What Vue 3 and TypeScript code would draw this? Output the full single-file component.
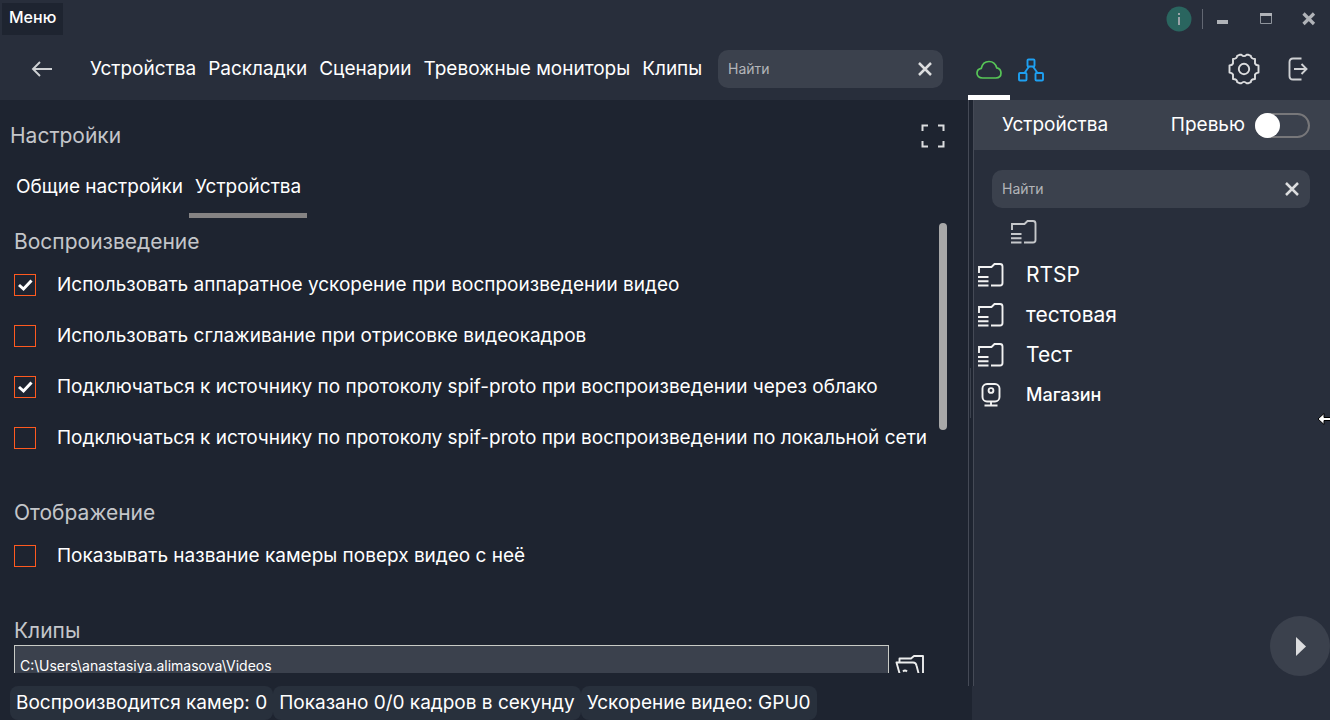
<script setup lang="ts">
import { ref } from 'vue'

interface Option { id: string; label: string; checked: boolean }
interface DeviceNode { id: string; label: string; kind: 'folder' | 'camera' }

const navItems: string[] = ['Устройства', 'Раскладки', 'Сценарии', 'Тревожные мониторы', 'Клипы']
const playback = ref<Option[]>([
  { id: 'hw', label: 'Использовать аппаратное ускорение при воспроизведении видео', checked: true },
  { id: 'smooth', label: 'Использовать сглаживание при отрисовке видеокадров', checked: false },
  { id: 'cloud', label: 'Подключаться к источнику по протоколу spif-proto при воспроизведении через облако', checked: true },
  { id: 'local', label: 'Подключаться к источнику по протоколу spif-proto при воспроизведении по локальной сети', checked: false },
])
const display = ref<Option[]>([
  { id: 'name', label: 'Показывать название камеры поверх видео с неё', checked: false },
])
const sections = [
  { title: 'Воспроизведение', options: playback },
  { title: 'Отображение', options: display },
]
const devices: DeviceNode[] = [
  { id: 'rtsp', label: 'RTSP', kind: 'folder' },
  { id: 'test1', label: 'тестовая', kind: 'folder' },
  { id: 'test2', label: 'Тест', kind: 'folder' },
  { id: 'shop', label: 'Магазин', kind: 'camera' },
]
const stats: string[] = ['Воспроизводится камер: 0', 'Показано 0/0 кадров в секунду', 'Ускорение видео: GPU0']
const clipsPath = ref('C:\\Users\\anastasiya.alimasova\\Videos')
const topSearch = ref('')
const sideSearch = ref('')
const preview = ref(false)
</script>

<template>
  <div class="app">
    <header class="top">
      <div class="titlebar">
        <button class="menu" type="button">Меню</button>
        <div class="window-tools">
          <button class="info" type="button" aria-label="Информация">
            <svg width="26" height="26" viewBox="0 0 26 26">
              <circle cx="13" cy="13" r="12.5" fill="#2a655f" />
              <path d="M12 7h2v2h-2zM12 11h2v8h-2z" fill="#9aa3a8" />
            </svg>
          </button>
          <span class="divider"></span>
          <button class="win" type="button" aria-label="Свернуть">
            <svg width="14" height="14" viewBox="0 0 14 14"><path d="M1 8h11v4H1z" fill="#b0b3b8" /></svg>
          </button>
          <button class="win" type="button" aria-label="Развернуть">
            <svg width="14" height="14" viewBox="0 0 14 14">
              <path d="M1.500 1.500h11v10h-11z" fill="none" stroke="#8f949c" /><path d="M1 1h12v3H1z" fill="#b0b3b8" />
            </svg>
          </button>
          <button class="win" type="button" aria-label="Закрыть">
            <svg width="14" height="14" viewBox="0 0 14 14"><path d="M1.500 1.500l10.500 10.500M12 1.500L1.500 12" stroke="#b0b3b8" stroke-width="3.200" /></svg>
          </button>
        </div>
      </div>
      <div class="navbar">
        <div class="nav-left">
          <button class="back" type="button" aria-label="Назад">
            <svg width="22" height="16" viewBox="0 0 22 16">
              <path d="M21 8H2M9 1L2 8l7 7" fill="none" stroke="#cfd1d4" stroke-width="1.900" />
            </svg>
          </button>
          <nav class="links">
            <a v-for="item in navItems" :key="item" href="#">{{ item }}</a>
          </nav>
          <div class="search">
            <input v-model="topSearch" type="text" placeholder="Найти" aria-label="Найти" />
            <button type="button" aria-label="Очистить">
              <svg width="16" height="16" viewBox="0 0 16 16"><path d="M2 2l12 12M14 2L2 14" stroke="#dcdddf" stroke-width="2.500" /></svg>
            </button>
          </div>
        </div>
        <div class="nav-right">
          <button class="mode active" type="button" aria-label="Облако">
            <svg width="26" height="20" viewBox="0 0 26 20">
              <path d="M6.500 18C3 18 1 16 1 13.300c0-2.600 1.800-4.600 4.300-5C6.200 4.300 9.200 1.500 13 1.500s6.600 2.300 7.700 6.300c2.600.6 4.300 2.700 4.300 5.300 0 2.900-2 4.900-5.200 4.900z" fill="none" stroke="#57c657" stroke-width="1.700" />
            </svg>
          </button>
          <button class="mode" type="button" aria-label="Сеть">
            <svg width="26" height="24" viewBox="0 0 26 24">
              <g fill="none" stroke="#1ea0f2" stroke-width="1.900">
                <rect x="9.500" y="1.500" width="7" height="7" rx="1" />
                <rect x="1" y="15" width="7.500" height="7.500" rx="1" />
                <rect x="17.500" y="15" width="7.500" height="7.500" rx="1" />
                <path d="M11 8.500l-4.500 6.500M15 8.500l4.500 6.500" />
              </g>
            </svg>
          </button>
          <span class="grow"></span>
          <button class="tool" type="button" aria-label="Настройки">
            <svg width="32" height="32" viewBox="0 0 32 32">
              <g fill="none" stroke="#dcdddf" stroke-width="1.900">
                <path d="M11.500 1.800h2q2.500 2.700 5 0h2l2.300 1q.2 3.200 4.200 3.200v4.500q.7 1.600 3.500 2v7q-2.800.4-3.500 2V26q-4 0-4.200 3.200l-2.300 1h-2q-2.500-2.700-5 0h-2l-2.300-1Q9 26 5 26v-4.500q-.7-1.600-3.500-2v-7q2.800-.4 3.500-2V6q4 0 4.200-3.200z" stroke-linejoin="round" />
                <circle cx="16" cy="16" r="5.200" />
              </g>
            </svg>
          </button>
          <button class="tool" type="button" aria-label="Выход">
            <svg width="20" height="24" viewBox="0 0 20 24">
              <path d="M13.500 1.500H5Q1.500 1.500 1.500 5v14q0 3.500 3.500 3.500h8.500M6 12h12M13.500 7l5 5-5 5" fill="none" stroke="#cfd1d4" stroke-width="1.900" />
            </svg>
          </button>
        </div>
      </div>
    </header>

    <div class="middle">
      <main class="settings">
        <div class="head">
          <h1>Настройки</h1>
          <button type="button" aria-label="Во весь экран">
            <svg width="24" height="24" viewBox="0 0 24 24">
              <path d="M7 1.500H1.500V7M17 1.500h5.500V7M7 22.500H1.500V17M17 22.500h5.500V17" fill="none" stroke="#dcdddf" stroke-width="2" />
            </svg>
          </button>
        </div>
        <div class="tabs" role="tablist">
          <button type="button" role="tab" aria-selected="false">Общие настройки</button>
          <button class="active" type="button" role="tab" aria-selected="true">Устройства</button>
        </div>
        <div class="scroller">
          <div class="content">
            <section v-for="section in sections" :key="section.title">
              <h2>{{ section.title }}</h2>
              <label v-for="option in section.options.value" :key="option.id" class="option">
                <span class="box">
                  <input v-model="option.checked" type="checkbox" />
                  <svg v-if="option.checked" width="22" height="22" viewBox="0 0 22 22">
                    <path d="M5 11l4.500 4 8-8.500" fill="none" stroke="#fff" stroke-width="3" />
                  </svg>
                </span>
                <span>{{ option.label }}</span>
              </label>
            </section>
            <section>
              <h2><label for="clips-path">Клипы</label></h2>
              <div class="path-row">
                <input id="clips-path" v-model="clipsPath" type="text" />
                <button type="button" aria-label="Выбрать папку">
                  <svg width="30" height="22" viewBox="0 0 30 22">
                    <g fill="none" stroke="#eceded" stroke-width="1.900" stroke-linejoin="round">
                      <path d="M4.500 8V4.500H16l3-2.500h9v19H6" />
                      <path d="M1.500 8.500H18q3 0 3.500 3L24 21H5z" />
                      <path d="M8 17.500q2-2 4 0" />
                    </g>
                  </svg>
                </button>
              </div>
            </section>
          </div>
          <div class="thumb"></div>
        </div>
      </main>

      <div class="splitter"><span></span></div>

      <aside class="side">
        <div class="side-head">
          <h2>Устройства</h2>
          <label class="switch">
            <span>Превью</span>
            <input v-model="preview" type="checkbox" role="switch" />
          </label>
        </div>
        <div class="search">
          <input v-model="sideSearch" type="text" placeholder="Найти" aria-label="Найти устройство" />
          <button type="button" aria-label="Очистить">
            <svg width="16" height="16" viewBox="0 0 16 16"><path d="M2 2l12 12M14 2L2 14" stroke="#dcdddf" stroke-width="2.500" /></svg>
          </button>
        </div>
        <div class="root">
          <svg width="28" height="24" viewBox="0 0 28 24">
            <path d="M2 10V4h12.500l3-3H23q2.500 0 2.500 2.500V20q0 2.500-2.500 2.500H14M1 14h10.500M1 18.200h10.500M1 22.500h10.500" fill="none" stroke="#c6c8cb" stroke-width="1.900" />
          </svg>
        </div>
        <ul class="tree">
          <li v-for="node in devices" :key="node.id" :class="node.kind">
            <span class="icon">
              <svg v-if="node.kind === 'folder'" width="28" height="24" viewBox="0 0 28 24">
                <path d="M2 10V4h12.500l3-3H23q2.500 0 2.500 2.500V20q0 2.500-2.500 2.500H14M1 14h10.500M1 18.200h10.500M1 22.500h10.500" fill="none" stroke="#f2f2f2" stroke-width="1.900" />
              </svg>
              <svg v-else width="20" height="24" viewBox="0 0 20 24">
                <g fill="none" stroke="#f2f2f2" stroke-width="1.900">
                  <rect x="1.500" y="1" width="17" height="17.500" rx="4.500" />
                  <circle cx="10" cy="7.500" r="2.400" />
                  <path d="M10 18.500v4M3.500 22.500h13" />
                </g>
              </svg>
            </span>
            <span>{{ node.label }}</span>
          </li>
        </ul>
        <button class="play" type="button" aria-label="Воспроизвести">
          <svg width="60" height="60" viewBox="0 0 60 60"><path d="M26 21l10 9.500L26 40z" fill="#dcdddf" /></svg>
        </button>
        <svg class="pointer" width="12" height="14" viewBox="0 0 12 14">
          <path d="M0 7l6-5.500v4h7v3H6v4z" fill="#fff" stroke="#000" stroke-width="1" />
        </svg>
      </aside>
    </div>

    <footer class="status">
      <div class="stats">
        <span v-for="stat in stats" :key="stat">{{ stat }}</span>
      </div>
      <div class="status-side"></div>
    </footer>
  </div>
</template>

<style>
body {
  margin: 0;
  background: #1e2430;
}
</style>

<style scoped>
.app {
  --bar: #282e3b;
  --base: #1e2430;
  --field: #3b414d;
  --side: 362px;
  display: flex;
  flex-direction: column;
  height: 100vh;
  overflow: hidden;
  background: var(--base);
  color: #fff;
  font: 400 19px/24px Inter, "Noto Sans", sans-serif;
}
.app * { box-sizing: border-box; }
button {
  display: flex;
  align-items: center;
  justify-content: center;
  padding: 0;
  border: 0;
  background: none;
  color: inherit;
  font: inherit;
}
svg { display: block; flex: none; }
h1, h2 { margin: 0; font-weight: 400; }
input { font: inherit; color: inherit; }

.top { background: var(--bar); flex: none; }
.titlebar {
  display: flex;
  justify-content: space-between;
  height: 38px;
}
.menu {
  align-self: flex-start;
  height: 32px;
  margin: 3px 2px;
  padding: 0 7px 4px;
  background: var(--base);
  font-size: 16px;
  font-weight: 500;
}
.window-tools { display: flex; align-items: center; padding-right: 14px; }
.divider { width: 1px; height: 20px; margin: 0 13px 0 10px; background: #626772; }
.win { width: 14px; margin-left: 29px; }
.divider + .win { margin-left: 0; }

.navbar { display: flex; height: 62px; }
.nav-left { display: flex; flex: 1; align-items: center; min-width: 0; padding: 0 25px 0 31px; }
.links { display: flex; flex: 1; gap: 12px; margin-left: 37px; }
.links a { color: inherit; text-decoration: none; white-space: nowrap; }
.search {
  display: flex;
  align-items: center;
  height: 38px;
  padding: 0 10px;
  border-radius: 10px;
  background: var(--field);
}
.search input {
  flex: 1;
  min-width: 0;
  padding: 0;
  border: 0;
  outline: 0;
  background: none;
  font-size: 14px;
}
.search input::placeholder { color: #b3b5b9; opacity: 1; }
.nav-left .search { width: 225px; }
.nav-right { display: flex; width: var(--side); padding-right: 22px; }
.mode { width: 42px; border-bottom: 5px solid transparent; padding-top: 7px; }
.mode.active { border-color: #fff; }
.grow { flex: 1; }
.tool + .tool { margin-left: 28px; }

.middle { display: flex; flex: 1; min-height: 0; }
.settings { display: flex; flex: 1; flex-direction: column; min-width: 0; padding: 12px 21px 13px 10px; }
.head { display: flex; align-items: center; justify-content: space-between; height: 48px; padding-right: 2px; }
h1, .content h2 { color: #c4c6ca; font-size: 21px; line-height: 28px; }
.tabs { display: flex; height: 58px; }
.tabs button { height: 58px; padding: 0 6px; border-bottom: 5px solid transparent; }
.tabs .active { border-color: #858383; }
.scroller { display: flex; flex: 1; min-height: 0; justify-content: space-between; overflow: hidden; padding: 5px 0 0 4px; }
.content { flex: 1; min-width: 0; }
.content section { margin: 5px 0 36px; }
.option { display: flex; align-items: center; gap: 21px; height: 51px; white-space: nowrap; }
h2 + .option { margin-top: 3px; }
.box { position: relative; width: 22px; height: 22px; }
.box input { display: block; width: 22px; height: 22px; margin: 0; border: 1px solid #ff5a1f; appearance: none; }
.box svg { position: absolute; inset: 0; pointer-events: none; }
.path-row { display: flex; align-items: center; gap: 6px; padding-right: 14px; }
.path-row input {
  flex: 1;
  height: 40px;
  padding: 0 5px;
  border: 1px solid #c9cbc6;
  background: var(--field);
  font-size: 14px;
}
.thumb { width: 8px; height: 207px; border-radius: 4px; background: #a8a8a8; }

.splitter {
  display: flex;
  align-items: center;
  width: 6px;
  border: solid #454a56;
  border-width: 0 1px;
}
.splitter span { width: 1px; height: 50px; margin-left: 1px; background: #3b414d; }

.side { position: relative; width: calc(var(--side) - 6px); background: var(--bar); }
.side-head {
  display: flex;
  align-items: center;
  justify-content: space-between;
  height: 50px;
  padding: 0 20px 0 28px;
  background: var(--field);
}
.side-head h2 { font-size: 19px; }
.switch { display: flex; align-items: center; gap: 10px; }
.switch input {
  width: 55px;
  height: 25px;
  margin: 0;
  border: 2px solid #77777a;
  border-radius: 13px;
  appearance: none;
}
.switch input::before {
  content: "";
  display: block;
  width: 25px;
  height: 25px;
  margin: -2px;
  border-radius: 50%;
  background: #fff;
}
.side .search { margin: 20px 20px 0 18px; }
.root { display: flex; align-items: center; height: 47px; padding: 1px 0 0 36px; }
.tree { margin: 0; padding: 0; list-style: none; }
.tree li { display: flex; align-items: center; height: 40px; font-size: 21px; }
.tree .camera { font-size: 18px; font-weight: 500; }
.icon { display: flex; justify-content: center; width: 28px; margin: 0 21px 0 3px; }
.play {
  position: absolute;
  right: 0;
  bottom: 10px;
  width: 60px;
  height: 60px;
  border-radius: 50%;
  background: var(--field);
}
.pointer { position: absolute; right: 0; top: 312px; }

.status { display: flex; flex: none; height: 34px; }
.stats { display: flex; flex: 1; padding-left: 10px; }
.stats span { padding: 5px 6px; border-radius: 8px; background: #28303c; white-space: nowrap; }
.status-side { width: calc(var(--side) - 4px); background: var(--bar); }
</style>
